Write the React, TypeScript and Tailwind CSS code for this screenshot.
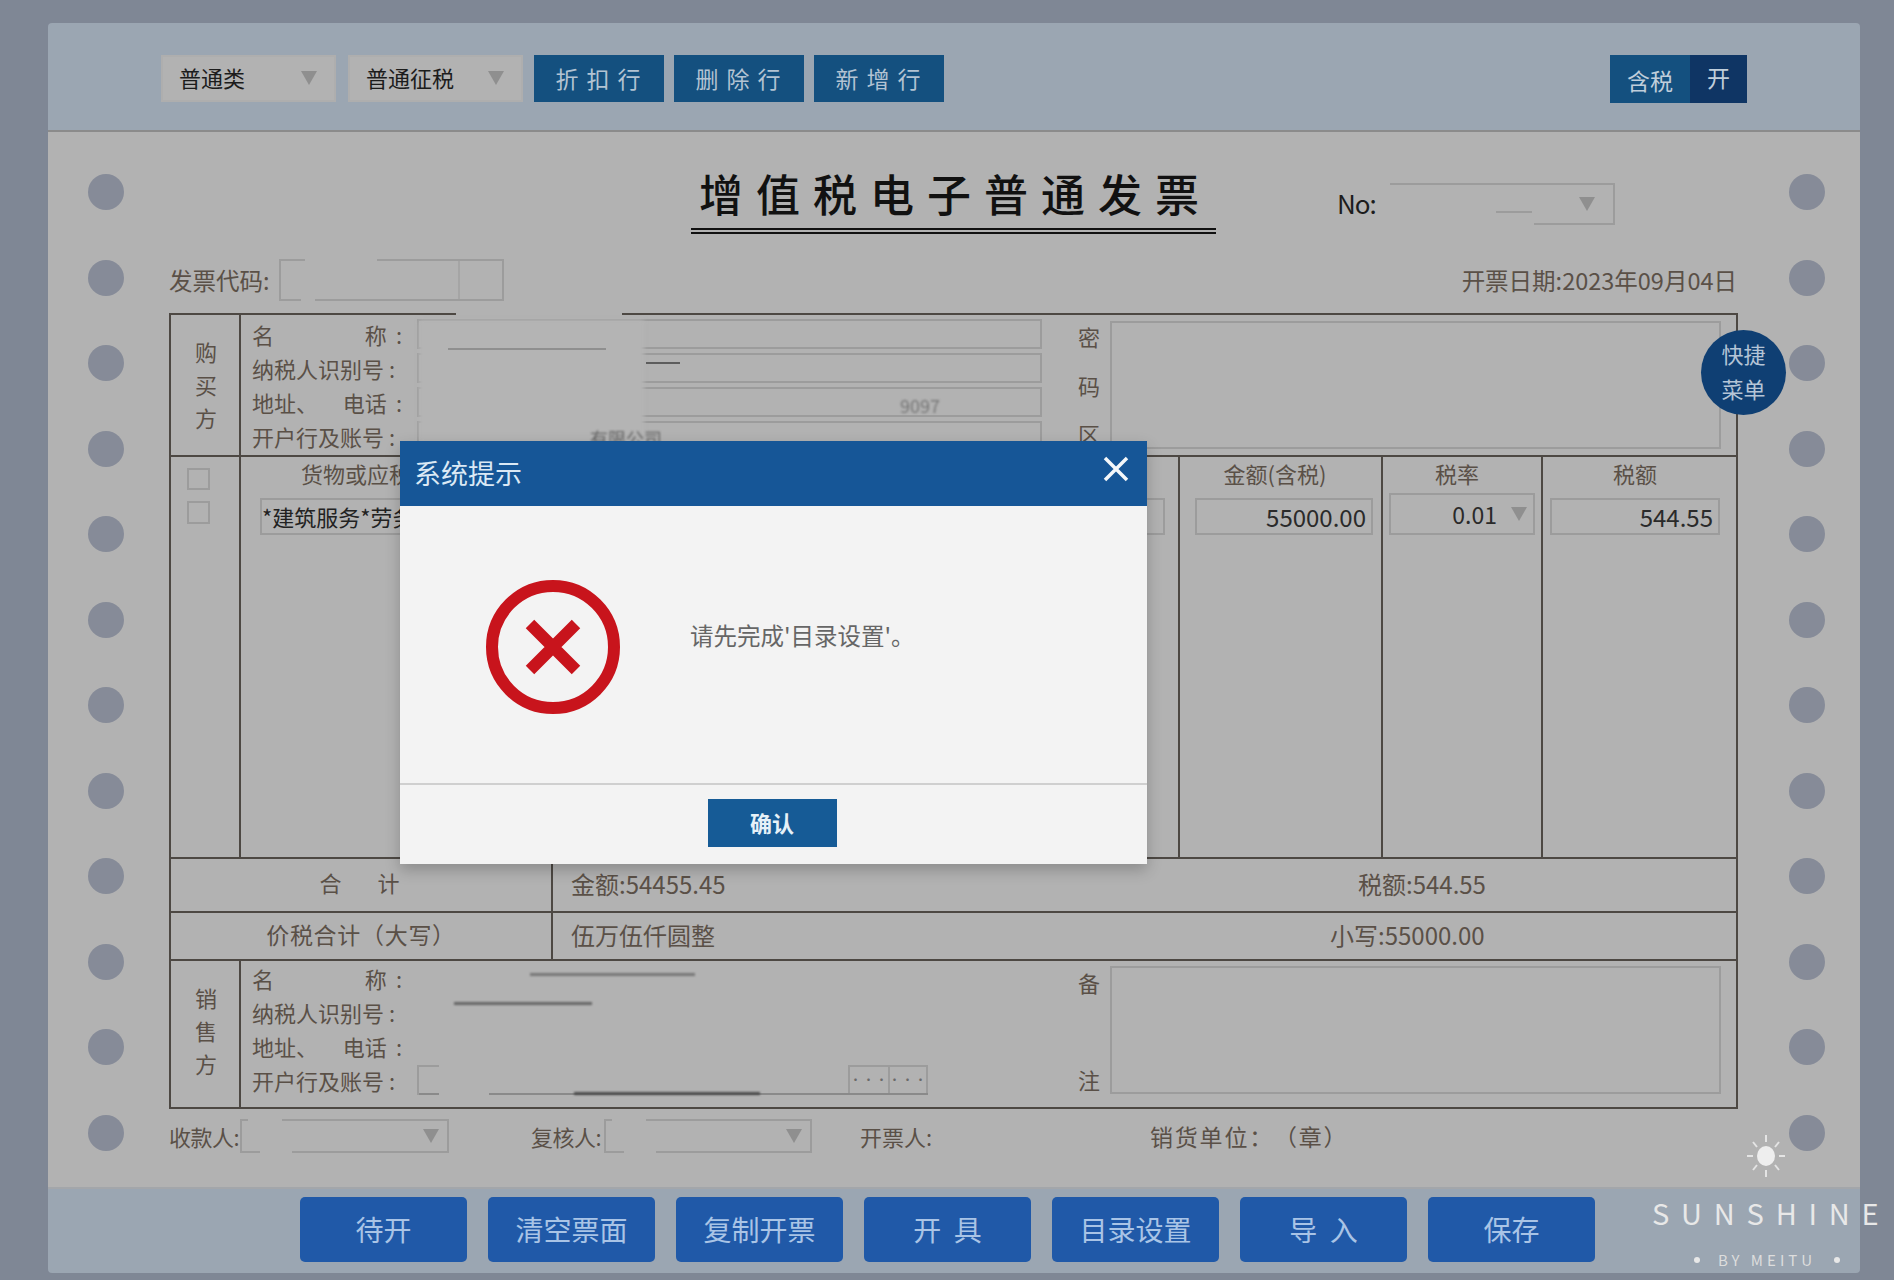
import type { ReactNode } from 'react';

const HOLES = Array.from({ length: 12 }, (_, i) => i);
const FOOTER_BUTTONS = ['待开', '清空票面', '复制开票', '开 具', '目录设置', '导 入', '保存'];

// Small grey select arrow
function Arrow({ className = '' }: { className?: string }) {
  return (
    <svg width="16" height="14" viewBox="0 0 16 14" className={className}>
      <path d="M0 0H16L8 14Z" fill="#8f8f8f" />
    </svg>
  );
}

function HoleColumn({ className = '' }: { className?: string }) {
  return (
    <div className={`flex w-[36px] shrink-0 flex-col gap-[49.5px] pt-[42px] ${className}`}>
      {HOLES.map((i) => (
        <div key={i} className="h-[36px] w-[36px] rounded-full bg-[#868b98]" />
      ))}
    </div>
  );
}

function PartyColumn({ chars, className = '' }: { chars: string[]; className?: string }) {
  return (
    <div
      className={`flex w-[70px] shrink-0 flex-col items-center justify-center gap-[7px] border-r-2 border-[#4d4843] pl-[2px] text-[22px] leading-[26px] ${className}`}
    >
      {chars.map((c) => (
        <span key={c}>{c}</span>
      ))}
    </div>
  );
}

function InfoRow({ label, children }: { label: ReactNode; children?: ReactNode }) {
  return (
    <div className="flex h-[34px] items-center">
      <div className="w-[165px] shrink-0 text-[22px] leading-[34px]">{label}</div>
      {children}
    </div>
  );
}

const NAME_LABEL = (
  <span className="flex w-[150px] justify-between">
    <span>名</span>
    <span>
      称<span className="ml-[9px]">:</span>
    </span>
  </span>
);
const ADDRESS_LABEL = (
  <span className="flex w-[150px] justify-between">
    <span>地址、</span>
    <span>
      电话<span className="ml-[9px]">:</span>
    </span>
  </span>
);

function BuyerInput() {
  return <div className="h-[30px] w-[626px] border-2 border-[#9c9c9c]" />;
}

function SellerAccountInput() {
  return (
    <div className="relative flex h-[30px] w-[511px] justify-end border-b-2 border-[#8a8a8a]">
      <div className="absolute bottom-[-2px] left-0 h-[30px] w-[22px] border-l-2 border-t-2 border-[#9c9c9c]" />
      <div className="absolute bottom-[-2px] left-[22px] h-[2px] w-[50px] bg-[#b2b2b2]" />
      <div className="absolute bottom-[-2px] left-[157px] h-[3px] w-[186px] bg-[#4d4d4d] blur-[1px]" />
      <div className="flex w-[40px] items-center justify-center border-l-2 border-t-2 border-[#9c9c9c] text-[12px] leading-none tracking-[1px] text-[#6a6a6a]">
        ···
      </div>
      <div className="flex w-[40px] items-center justify-center border-x-2 border-t-2 border-[#9c9c9c] text-[12px] leading-none tracking-[1px] text-[#6a6a6a]">
        ···
      </div>
    </div>
  );
}

function ItemHeader({ children, className = '' }: { children: ReactNode; className?: string }) {
  return <div className={`h-[33px] text-center text-[22px] leading-[33px] ${className}`}>{children}</div>;
}

function NumberBox({ value, className = '' }: { value: string; className?: string }) {
  return (
    <div
      className={`mt-[8px] flex h-[37px] items-center justify-end border-2 border-[#9c9c9c] pr-[5px] text-[24px] text-[#2a2a2a] ${className}`}
    >
      {value}
    </div>
  );
}

function SmallSelect({ className = '' }: { className?: string }) {
  return (
    <div className={`relative flex h-[34px] shrink-0 items-center justify-end border-2 border-[#9c9c9c] pr-[8px] ${className}`}>
      <div className="absolute left-[6px] top-[-2px] h-[2px] w-[34px] bg-[#b2b2b2]" />
      <div className="absolute bottom-[-2px] left-[18px] h-[2px] w-[32px] bg-[#b2b2b2]" />
      <Arrow />
    </div>
  );
}

function ErrorIcon() {
  return (
    <svg width="134" height="134" viewBox="0 0 134 134" className="shrink-0">
      <circle cx="67" cy="67" r="61" fill="none" stroke="#c8141c" strokeWidth="12" />
      <path d="M44 44L90 90M90 44L44 90" fill="none" stroke="#c8141c" strokeWidth="12" />
    </svg>
  );
}

function Sun() {
  return (
    <svg width="40" height="44" viewBox="0 0 40 44">
      <ellipse cx="20" cy="22" rx="9" ry="10" fill="#eeeeee" />
      <path
        d="M20 1V8M20 36V43M1 22H7M33 22H39M7 8L11 13M33 8L29 13M7 36L11 31M33 36L29 31"
        fill="none"
        stroke="#e4e4e4"
        strokeWidth="2"
      />
    </svg>
  );
}

export default function App() {
  return (
    <div className="relative h-[1280px] w-[1894px] overflow-hidden bg-[#7f8795] pl-[48px] pt-[23px] font-['Noto_Sans_CJK_SC','Noto_Sans',sans-serif] text-[#5a5047]">
      <div className="flex h-[1250px] w-[1812px] flex-col overflow-hidden rounded-[4px]">
        {/* Top toolbar */}
        <div className="flex h-[109px] shrink-0 items-start gap-[10px] border-b-2 border-[#8b8b8b] bg-[#9ba6b2] pl-[113px] pr-[113px] pt-[32px]">
          <div className="flex h-[47px] w-[175px] items-center justify-between border-2 border-[#aeaeae] bg-[#b2b2b2] pb-[2px] pl-[16px] pr-[17px] text-[22px] text-[#1c1c1c]">
            普通类
            <Arrow />
          </div>
          <div className="ml-[2px] flex h-[47px] w-[175px] items-center justify-between border-2 border-[#aeaeae] bg-[#b2b2b2] pb-[2px] pl-[16px] pr-[17px] text-[22px] text-[#1c1c1c]">
            普通征税
            <Arrow />
          </div>
          <div className="ml-[1px] flex gap-[10px]">
            {['折扣行', '删除行', '新增行'].map((label) => (
              <div
                key={label}
                className="flex h-[47px] w-[130px] items-center justify-center bg-[#14507f] pl-[6px] text-[23px] tracking-[8px] text-[#b3c3d3]"
              >
                {label}
              </div>
            ))}
          </div>
          <div className="ml-auto flex h-[48px] w-[137px] text-[23px] text-[#c0cedb]">
            <div className="flex w-[80px] items-center justify-center bg-[#14507f] pt-[2px]">含税</div>
            <div className="flex flex-1 items-center justify-center bg-[#0f3564] pb-[4px]">开</div>
          </div>
        </div>

        {/* Invoice paper */}
        <div className="flex min-h-0 flex-1 bg-[#b2b2b2] pl-[40px]">
          <HoleColumn />
          <div className="ml-[45px] w-[1569px] shrink-0">
            <div className="ml-[522px] mt-[31px] flex items-start">
              <div className="h-[71px] w-[525px] border-b-[6px] border-double border-[#111111] pl-[8px] text-[44px] font-medium leading-[60px] tracking-[13px] text-[#111111]">
                增值税电子普通发票
              </div>
              <div className="ml-[121px] mt-[20px] flex h-[42px] items-center">
                <span className="mb-[4px] w-[53px] text-[26px] tracking-[-1px] text-[#1c1c1c]">No:</span>
                <div className="relative flex h-[42px] w-[225px] items-center justify-end border-2 border-[#9c9c9c] pr-[18px]">
                  <div className="absolute bottom-[-2px] left-[-2px] h-[40px] w-[144px] bg-[#b2b2b2]" />
                  <div className="absolute bottom-[10px] left-[104px] h-[2px] w-[36px] bg-[#9c9c9c]" />
                  <Arrow />
                </div>
              </div>
            </div>

            <div className="mt-[25px] flex h-[42px] items-center text-[23.5px]">
              <span className="w-[110px] pt-[1px]">发票代码:</span>
              <div className="relative h-[42px] w-[225px] border-2 border-[#9c9c9c]">
                <div className="absolute right-[42px] top-0 h-[38px] w-[2px] bg-[#a5a5a5]" />
                <div className="absolute left-[24px] top-[-2px] h-[2px] w-[72px] bg-[#b2b2b2]" />
                <div className="absolute bottom-[-2px] left-[20px] h-[2px] w-[14px] bg-[#b2b2b2]" />
              </div>
              <span className="ml-auto mr-[1px] pt-[1px]">开票日期:2023年09月04日</span>
            </div>

            <div className="mt-[12px] border-2 border-[#4d4843]">
              {/* Buyer */}
              <div className="flex h-[142px] border-b-2 border-[#4d4843]">
                <PartyColumn chars={['购', '买', '方']} className="pb-[2px]" />
                <div className="w-[801px] shrink-0 pl-[11px] pt-[2px]">
                  <InfoRow label={NAME_LABEL}>
                    <BuyerInput />
                  </InfoRow>
                  <InfoRow label="纳税人识别号 :">
                    <BuyerInput />
                  </InfoRow>
                  <InfoRow label={ADDRESS_LABEL}>
                    <BuyerInput />
                  </InfoRow>
                  <InfoRow label="开户行及账号 :">
                    <BuyerInput />
                  </InfoRow>
                </div>
                <div className="ml-[36px] flex h-[132px] w-[22px] flex-col justify-between pt-[7px] text-[22px] leading-[28px]">
                  <span>密</span>
                  <span>码</span>
                  <span>区</span>
                </div>
                <div className="ml-[10px] mt-[6px] h-[128px] w-[611px] border-2 border-[#9c9c9c]" />
              </div>

              {/* Goods */}
              <div className="flex h-[402px] border-b-2 border-[#4d4843]">
                <div className="flex w-[70px] shrink-0 flex-col gap-[11px] border-r-2 border-[#4d4843] pl-[16px] pt-[11px]">
                  <div className="h-[22px] w-[23px] border-2 border-[#9c9c9c]" />
                  <div className="h-[23px] w-[23px] border-2 border-[#9c9c9c]" />
                </div>
                <div className="w-[939px] shrink-0 border-r-2 border-[#4d4843] pl-[19px] pr-[13px]">
                  <div className="h-[33px] pl-[41px] text-[22px] leading-[33px]">货物或应税劳务、服务名称</div>
                  <div className="mt-[8px] flex h-[37px] items-center border-2 border-[#9c9c9c] text-[22px] text-[#222222]">
                    *建筑服务*劳务
                  </div>
                </div>
                <div className="w-[203px] shrink-0 border-r-2 border-[#4d4843] pl-[15px] pr-[8px]">
                  <ItemHeader className="pr-[18px]">金额(含税)</ItemHeader>
                  <NumberBox value="55000.00" />
                </div>
                <div className="w-[160px] shrink-0 border-r-2 border-[#4d4843] px-[6px]">
                  <ItemHeader className="pr-[10px]">税率</ItemHeader>
                  <div className="mt-[3px] flex h-[42px] items-center justify-end border-2 border-[#9c9c9c] pr-[6px] text-[23px] text-[#2a2a2a]">
                    0.01
                    <Arrow className="ml-[14px]" />
                  </div>
                </div>
                <div className="flex-1 pl-[7px] pr-[16px]">
                  <ItemHeader>税额</ItemHeader>
                  <NumberBox value="544.55" />
                </div>
              </div>

              {/* Totals */}
              <div className="flex h-[54px] items-center border-b-2 border-[#4d4843] pb-[3px] text-[24px]">
                <div className="mb-[-3px] flex h-[54px] w-[382px] shrink-0 items-center justify-center border-r-2 border-[#4d4843] pb-[5px] text-[22px] tracking-[3px]">
                  合　 计
                </div>
                <span className="ml-[18px] w-[787px]">金额:54455.45</span>
                <span>税额:544.55</span>
              </div>
              <div className="flex h-[48px] items-center border-b-2 border-[#4d4843] pb-[2px] text-[24px]">
                <div className="mb-[-2px] flex h-[48px] w-[382px] shrink-0 items-center justify-center border-r-2 border-[#4d4843] pb-[4px] text-[23px] tracking-[0.7px] [text-spacing-trim:space-all]">
                  价税合计（大写）
                </div>
                <span className="ml-[18px] w-[759px]">伍万伍仟圆整</span>
                <span>小写:55000.00</span>
              </div>

              {/* Seller */}
              <div className="flex h-[146px]">
                <PartyColumn chars={['销', '售', '方']} className="pb-[8px]" />
                <div className="w-[801px] shrink-0 pl-[11px]">
                  <InfoRow label={NAME_LABEL} />
                  <InfoRow label="纳税人识别号 :" />
                  <InfoRow label={ADDRESS_LABEL} />
                  <InfoRow label="开户行及账号 :">
                    <SellerAccountInput />
                  </InfoRow>
                </div>
                <div className="ml-[36px] flex h-[132px] w-[22px] flex-col justify-between pt-[7px] text-[22px] leading-[28px]">
                  <span>备</span>
                  <span>注</span>
                </div>
                <div className="ml-[10px] mt-[5px] h-[128px] w-[611px] border-2 border-[#9c9c9c]" />
              </div>
            </div>

            <div className="mt-[10px] flex h-[34px] items-center whitespace-nowrap text-[22px]">
              <span className="w-[71px] shrink-0 tracking-[-0.5px]">收款人:</span>
              <SmallSelect className="w-[209px]" />
              <span className="ml-[82px] w-[73px] shrink-0 tracking-[-0.5px]">复核人:</span>
              <SmallSelect className="w-[208px]" />
              <span className="ml-[48px] w-[290px] shrink-0">开票人:</span>
              <span className="text-[23px] tracking-[1.8px] [text-spacing-trim:space-all]">销货单位：（章）</span>
            </div>
          </div>
          <HoleColumn className="ml-[51px]" />
        </div>

        {/* Bottom buttons */}
        <div className="flex h-[86px] shrink-0 gap-[21px] border-t-2 border-[#a3a6aa] bg-[#9ba6b2] pl-[252px] pt-[8px]">
          {FOOTER_BUTTONS.map((label) => (
            <div
              key={label}
              className="flex h-[65px] w-[167px] items-center justify-center whitespace-pre rounded-[5px] bg-[#2059a8] pb-[2px] text-[28px] text-[#a9c4e6]"
            >
              {label.replace(' ', '  ')}
            </div>
          ))}
        </div>
      </div>

      {/* Redacted areas painted over the form */}
      <div className="absolute left-[456px] top-[313px] h-[4px] w-[166px] bg-[#b2b2b2]" />
      <div className="absolute left-[419px] top-[320px] h-[122px] w-[225px] bg-[#b4b4b4] blur-[2px]" />
      <div className="absolute left-[448px] top-[348px] h-[2px] w-[158px] bg-[#8f8f8f]" />
      <div className="absolute left-[646px] top-[362px] h-[2px] w-[34px] bg-[#5d5d5d]" />
      <div className="absolute left-[900px] top-[395px] text-[18px] leading-[20px] text-[#777777] blur-[1px]">9097</div>
      <div className="absolute left-[590px] top-[428px] text-[18px] leading-[20px] text-[#666666] blur-[1px]">有限公司</div>
      <div className="absolute left-[530px] top-[973px] h-[3px] w-[165px] bg-[#777777] blur-[1px]" />
      <div className="absolute left-[454px] top-[1002px] h-[3px] w-[138px] bg-[#666666] blur-[1px]" />

      {/* Quick menu bubble */}
      <div className="absolute left-[1701px] top-[330px] flex h-[85px] w-[85px] flex-col items-center justify-center rounded-full bg-[#0f3f73] pb-[4px] text-[22px] leading-[35px] text-[#b4c4d6]">
        <span>快捷</span>
        <span>菜单</span>
      </div>

      {/* Dialog */}
      <div className="absolute left-[400px] top-[441px] flex h-[423px] w-[747px] flex-col bg-[#f3f3f3] shadow-[0_6px_14px_rgba(0,0,0,0.22)]">
        <div className="flex h-[65px] shrink-0 items-center justify-between bg-[#165697] pl-[14px] pr-[18px] text-[27px] text-[#dbe9f5]">
          系统提示
          <svg width="26" height="26" viewBox="0 0 26 26" className="mb-[10px]">
            <path d="M2 2L24 24M24 2L2 24" fill="none" stroke="#f4f7fa" strokeWidth="3.5" />
          </svg>
        </div>
        <div className="flex h-[279px] shrink-0 items-start border-b-2 border-[#cfcfcf] pl-[86px] pt-[74px]">
          <ErrorIcon />
          <span className="ml-[70px] mt-[38px] text-[23.5px] text-[#666666]">请先完成'目录设置'。</span>
        </div>
        <div className="flex flex-1 justify-center pt-[14px]">
          <div className="mr-[3px] flex h-[48px] w-[129px] items-center justify-center bg-[#165b96] pb-[2px] text-[22px] font-bold text-[#e6f1f8]">
            确认
          </div>
        </div>
      </div>

      {/* Watermark */}
      <div className="absolute left-[1746px] top-[1134px]">
        <Sun />
      </div>
      <div className="absolute left-[1652px] top-[1192px] w-[240px] whitespace-nowrap text-[29px] leading-[40px] tracking-[11.8px] text-[#e8e8e8]">
        SUNSHINE
      </div>
      <div className="absolute left-[1694px] top-[1250px] flex w-[146px] items-center justify-between text-[15px] leading-[20px] tracking-[4px] text-[#dddddd]">
        <span className="h-[6px] w-[6px] rounded-full bg-[#e8e8e8]" />
        BY MEITU
        <span className="h-[6px] w-[6px] rounded-full bg-[#e8e8e8]" />
      </div>
    </div>
  );
}
